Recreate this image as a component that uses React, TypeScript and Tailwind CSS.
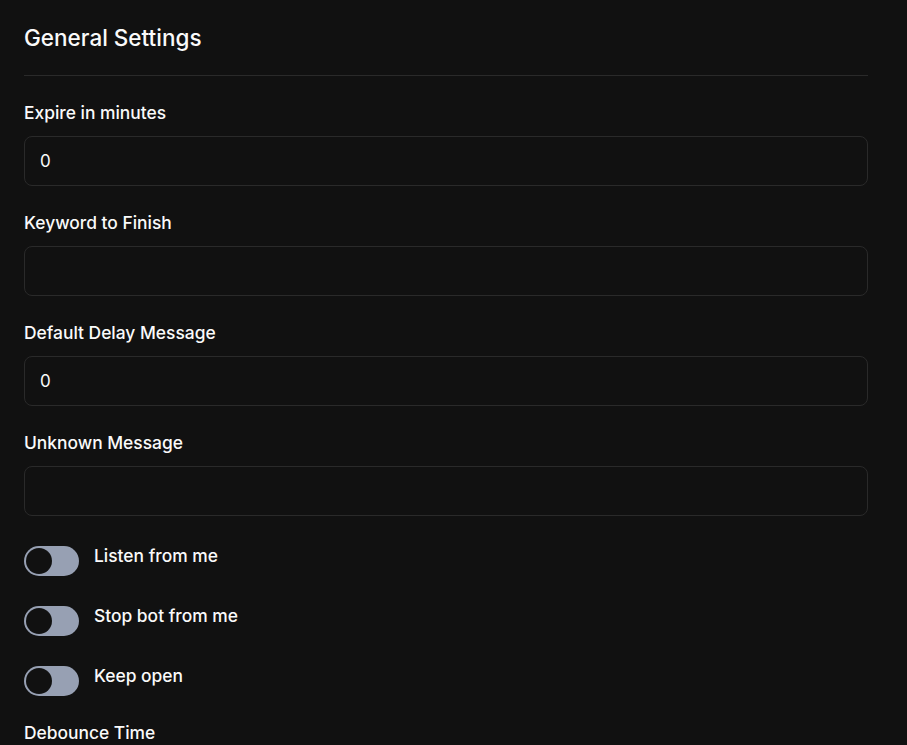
import React from "react";

function Field({ label, value }: { label: string; value: string }) {
  return (
    <div className="flex flex-col">
      <label className="pt-px -mb-px text-[17.4px] leading-6 font-medium text-[#fafafa]">{label}</label>
      <div className="mt-3 h-[50px] rounded-lg border border-[#2a2a2a] bg-[#111111] pl-[15px] pt-px flex items-center text-[17px] text-[#fafafa]">
        {value}
      </div>
    </div>
  );
}

function Toggle({ label }: { label: string }) {
  return (
    <div className="flex items-start gap-[15px] h-9">
      <div className="mt-[6px] w-[55px] h-[30px] rounded-full bg-[#97a0b3] p-[2px] flex items-center">
        <div className="w-[26px] h-[26px] rounded-full bg-[#111111]" />
      </div>
      <span className="mt-[4px] text-[17.4px] leading-6 font-medium text-[#fafafa]">{label}</span>
    </div>
  );
}

export default function App() {
  return (
    <div
      className="min-h-[745px] bg-[#111111] overflow-hidden"
      style={{ fontFamily: "Inter, 'Noto Sans', sans-serif" }}
    >
      <div className="ml-6 w-[844px] pt-6">
        <h2 className="text-[22.5px] leading-7 font-medium text-[#fafafa]">General Settings</h2>
        <div className="mt-[23px] h-px bg-[#2a2a2a]" />
        <div className="mt-6 flex flex-col gap-6">
          <Field label="Expire in minutes" value="0" />
          <Field label="Keyword to Finish" value="" />
          <Field label="Default Delay Message" value="0" />
          <Field label="Unknown Message" value="" />
          <Toggle label="Listen from me" />
          <Toggle label="Stop bot from me" />
          <Toggle label="Keep open" />
          <label className="pt-px text-[17.4px] leading-6 font-medium text-[#fafafa]">Debounce Time</label>
        </div>
      </div>
    </div>
  );
}
